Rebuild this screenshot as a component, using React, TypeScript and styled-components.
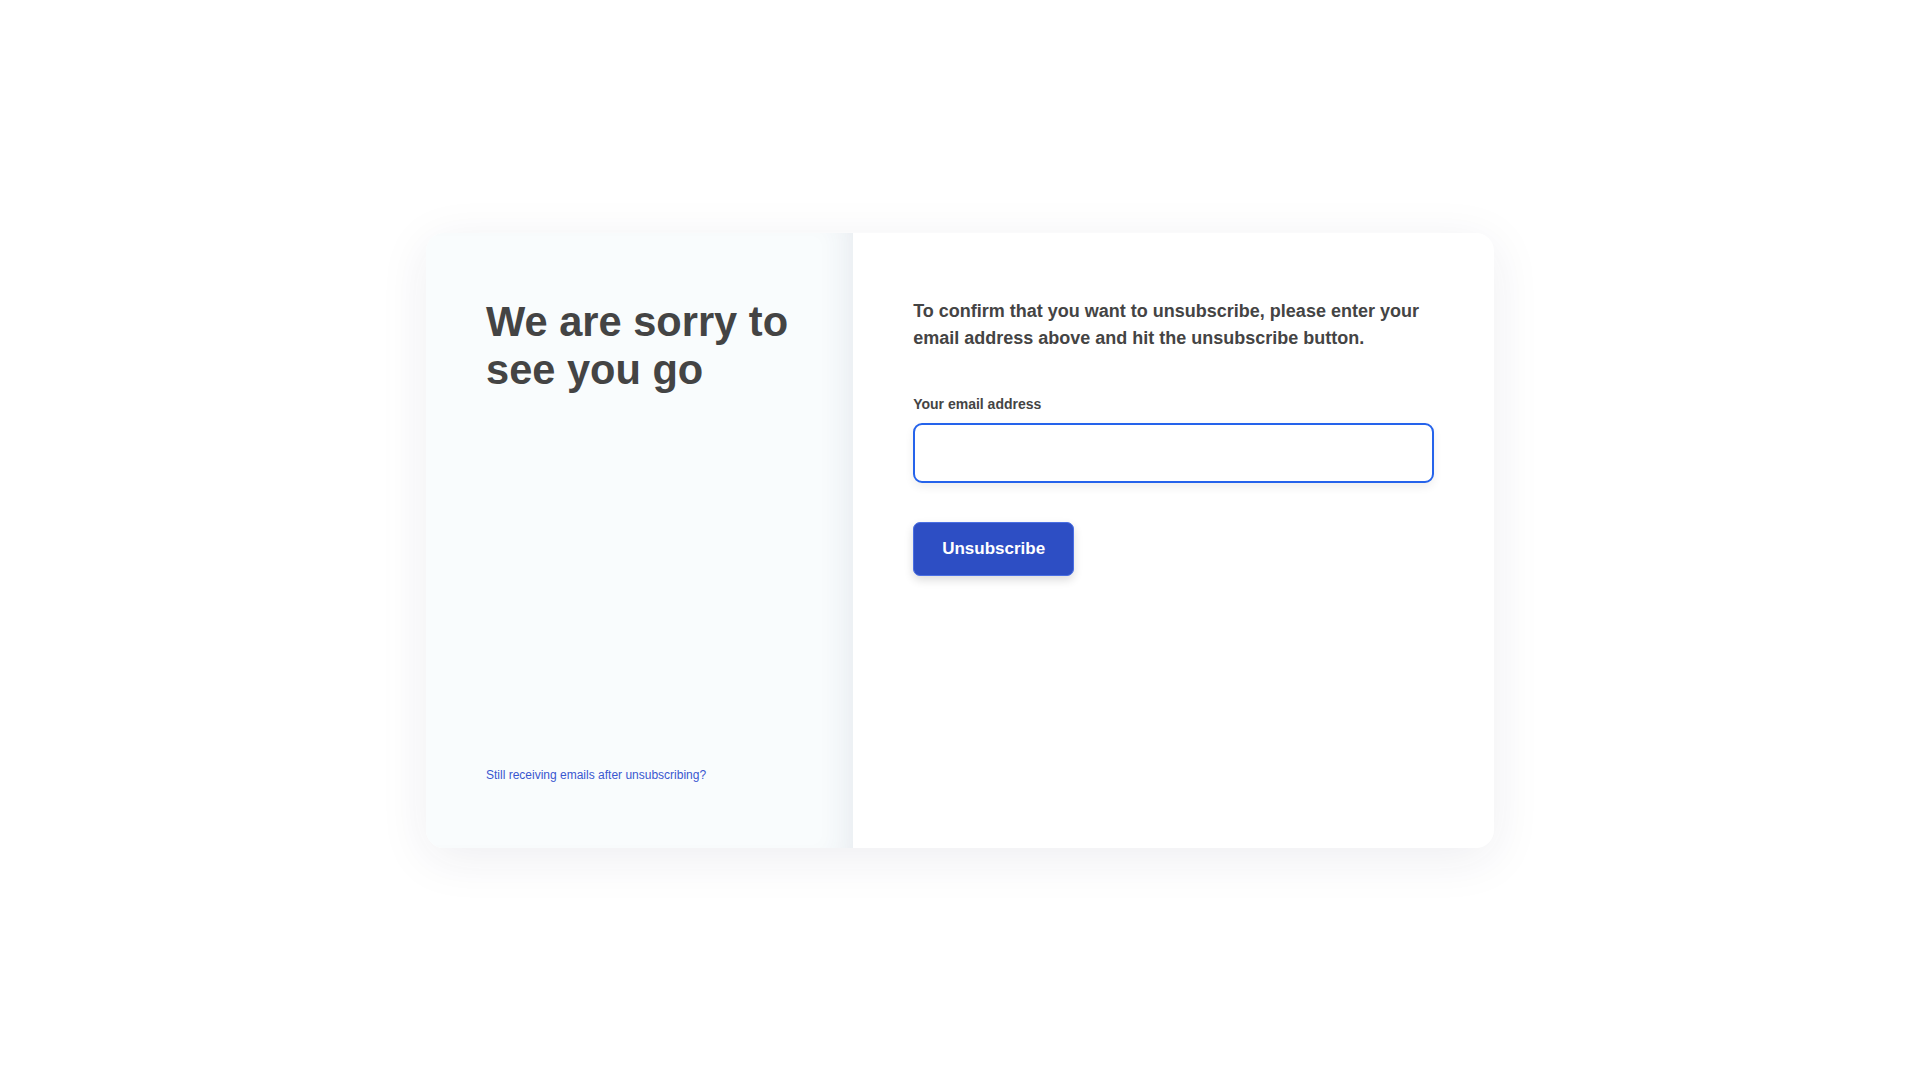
import React from "react";
import styled, { createGlobalStyle } from "styled-components";

const GlobalStyle = createGlobalStyle`
  html, body {
    margin: 0;
    padding: 0;
    background: #ffffff;
    font-family: "Liberation Sans", Arial, Helvetica, sans-serif;
  }
  * { box-sizing: border-box; }
`;

const Page = styled.main`
  min-height: 100vh;
  display: flex;
  align-items: center;
  justify-content: center;
`;

const Card = styled.section`
  width: 1068px;
  height: 615px;
  display: flex;
  border-radius: 18px;
  overflow: hidden;
  background: #ffffff;
  box-shadow: 0 10px 50px rgba(40, 40, 80, 0.08);
`;

const Aside = styled.div`
  flex: 0 0 40%;
  display: flex;
  flex-direction: column;
  padding: 64px 60px;
  background: #f9fcfd;
  box-shadow: inset -28px 0 30px -22px rgba(40, 50, 100, 0.09);
`;

const Title = styled.h1`
  margin: 1px 0 0;
  font-size: 41.6px;
  line-height: 1.17;
  font-weight: 700;
  color: #444444;
`;

const HelpLink = styled.a`
  margin-top: auto;
  font-size: 12px;
  line-height: 1.5;
  color: #3a57d0;
  text-decoration: none;
  cursor: pointer;
`;

const Main = styled.div`
  flex: 1 1 auto;
  padding: 65px 60px 64px;
  display: flex;
  flex-direction: column;
  align-items: flex-start;
`;

const Intro = styled.p`
  margin: 0 0 42px;
  font-size: 18px;
  line-height: 27px;
  font-weight: 700;
  color: #444444;
`;

const Label = styled.label`
  display: block;
  margin-bottom: 8px;
  font-size: 14px;
  line-height: 21px;
  font-weight: 700;
  color: #444444;
`;

const Input = styled.input`
  display: block;
  width: 100%;
  height: 60px;
  margin: 0 0 39px;
  padding: 0 16px;
  border: 2px solid #2563eb;
  border-radius: 9px;
  background: #ffffff;
  font-family: inherit;
  font-size: 16px;
  color: #333;
  outline: none;
  box-shadow: 0 4px 10px rgba(0, 0, 0, 0.07);
`;

const Button = styled.button`
  height: 54px;
  padding: 0 28px;
  border: 1px solid #4a6fe3;
  border-radius: 7px;
  background: #2d4ec4;
  color: #ffffff;
  font-family: inherit;
  font-size: 17px;
  font-weight: 700;
  line-height: 21px;
  cursor: pointer;
  box-shadow: 0 4px 10px rgba(0, 0, 0, 0.14);
`;

export default function App() {
  return (
    <>
      <GlobalStyle />
      <Page>
        <Card>
          <Aside>
            <Title>We are sorry to see you go</Title>
            <HelpLink>Still receiving emails after unsubscribing?</HelpLink>
          </Aside>
          <Main>
            <Intro>
              To confirm that you want to unsubscribe, please enter your email
              address above and hit the unsubscribe button.
            </Intro>
            <Label htmlFor="email">Your email address</Label>
            <Input id="email" type="email" />
            <Button type="button">Unsubscribe</Button>
          </Main>
        </Card>
      </Page>
    </>
  );
}
